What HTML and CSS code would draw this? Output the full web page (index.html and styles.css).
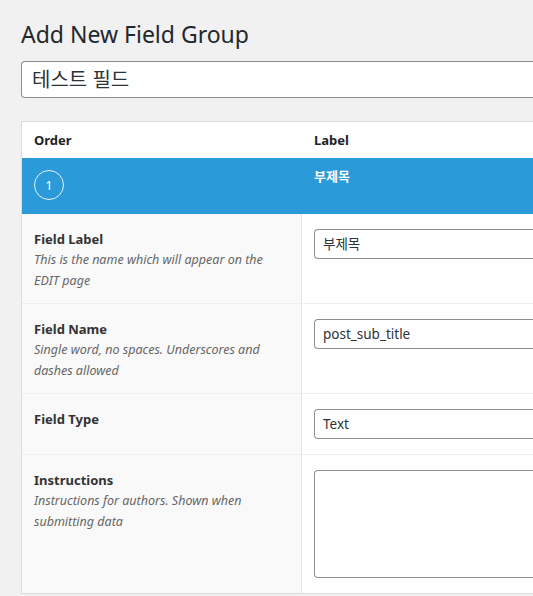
FILE: index.html
```html
<!DOCTYPE html>
<html lang="ko">
<head>
<meta charset="utf-8">
<link rel="stylesheet" href="styles.css">
</head>
<body>
<div class="wrap">
  <h1 class="page-title">Add New Field Group</h1>
  <div class="title-input">테스트 필드</div>
  <div class="fields">
    <div class="thead">
      <div class="th th-order">Order</div>
      <div class="th th-label">Label</div>
    </div>
    <div class="field-row">
      <div class="order"><span class="order-num">1</span></div>
      <div class="field-label-text">부제목</div>
    </div>
    <div class="settings">
      <div class="setting">
        <div class="setting-label">
          <div class="label-title">Field Label</div>
          <div class="label-desc">This is the name which will appear on the EDIT page</div>
        </div>
        <div class="setting-input"><div class="input">부제목</div></div>
      </div>
      <div class="setting">
        <div class="setting-label">
          <div class="label-title">Field Name</div>
          <div class="label-desc">Single word, no spaces. Underscores and dashes allowed</div>
        </div>
        <div class="setting-input"><div class="input">post_sub_title</div></div>
      </div>
      <div class="setting">
        <div class="setting-label">
          <div class="label-title">Field Type</div>
        </div>
        <div class="setting-input"><div class="input">Text</div></div>
      </div>
      <div class="setting">
        <div class="setting-label">
          <div class="label-title">Instructions</div>
          <div class="label-desc">Instructions for authors. Shown when submitting data</div>
        </div>
        <div class="setting-input"><div class="input textarea"></div></div>
      </div>
    </div>
  </div>
</div>
</body>
</html>
```
FILE: styles.css
```css
html, body {
  margin: 0;
  padding: 0;
  background: #f1f1f1;
  font-family: "Noto Sans", "Noto Sans CJK KR", sans-serif;
  color: #32373c;
  overflow: hidden;
}
.wrap {
  padding: 17px 0 0 21px;
}
.page-title {
  margin: 0;
  font-size: 23px;
  font-weight: 400;
  line-height: 34px;
  color: #23282d;
}
.title-input {
  margin-top: 10px;
  height: 35px;
  border: 1px solid #8c8f94;
  border-right: 0;
  border-radius: 4px 0 0 4px;
  background: #fff;
  font-size: 20px;
  line-height: 35px;
  padding: 0 10px;
  color: #2c3338;
}
.fields {
  margin-top: 23px;
  background: #fff;
  border: 1px solid #dcdcde;
  border-right: 0;
}
.thead {
  display: flex;
  height: 36px;
  align-items: center;
}
.th {
  font-size: 13px;
  font-weight: 700;
  color: #1d2327;
}
.th-order {
  width: 280px;
  padding-left: 12px;
  box-sizing: border-box;
}
.th-label {
  padding-left: 12px;
}
.field-row {
  display: flex;
  background: #2a9ad8;
  height: 56px;
}
.order {
  width: 280px;
  box-sizing: border-box;
  padding: 12px 0 0 12px;
}
.order-num {
  display: flex;
  width: 28px;
  height: 28px;
  border: 1.5px solid #e8f4fb;
  border-radius: 50%;
  align-items: center;
  justify-content: center;
  color: #fff;
  font-size: 13px;
  line-height: 1;
}
.field-label-text {
  padding: 8px 0 0 12px;
  color: #fff;
  font-weight: 700;
  font-size: 13px;
  line-height: 20px;
}
.setting {
  display: flex;
  border-top: 1px solid #eeeeee;
}
.setting:first-child {
  border-top: 0;
}
.setting-label {
  width: 280px;
  flex: none;
  box-sizing: border-box;
  background: #f9f9f9;
  border-right: 1px solid #e1e1e1;
  padding: 15px 12px 12px 12px;
}
.label-title {
  font-size: 13px;
  font-weight: 700;
  line-height: 20px;
  color: #333;
}
.label-desc {
  font-size: 12.5px;
  font-style: italic;
  line-height: 21px;
  color: #666;
}
.setting-input {
  flex: 1;
  padding: 15px 0 15px 12px;
}
.input {
  height: 28px;
  border: 1px solid #8c8f94;
  border-right: 0;
  border-radius: 4px 0 0 4px;
  background: #fff;
  font-size: 13.5px;
  line-height: 28px;
  padding: 0 8px;
  color: #2c3338;
}
.textarea {
  height: 106px;
}
```
